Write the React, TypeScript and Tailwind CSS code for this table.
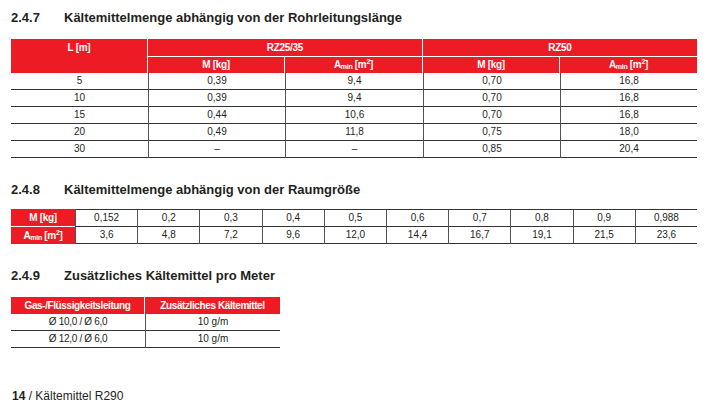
import React from "react";

const Amin = () => (
  <span>
    A<span className="text-[7px] align-[-1px]">min</span> [m<sup className="text-[7px] top-[-4px]">2</sup>]
  </span>
);

const Title = ({ n, t, cls }: { n: string; t: string; cls: string }) => (
  <div className={"flex text-[13px] leading-[16px] font-bold text-[#231f20] " + cls}>
    <span className="w-[53px]">{n}</span>
    <span>{t}</span>
  </div>
);

const rows1 = [
  ["5", "0,39", "9,4", "0,70", "16,8"],
  ["10", "0,39", "9,4", "0,70", "16,8"],
  ["15", "0,44", "10,6", "0,70", "16,8"],
  ["20", "0,49", "11,8", "0,75", "18,0"],
  ["30", "–", "–", "0,85", "20,4"],
];

const mVals = ["0,152", "0,2", "0,3", "0,4", "0,5", "0,6", "0,7", "0,8", "0,9", "0,988"];
const aVals = ["3,6", "4,8", "7,2", "9,6", "12,0", "14,4", "16,7", "19,1", "21,5", "23,6"];

export default function App() {
  return (
    <div className="w-[708px] h-[410px] bg-white pl-[11px] pt-[10px] font-['Liberation_Sans',Arial,sans-serif] text-[#231f20]">
      <Title n="2.4.7" t="Kältemittelmenge abhängig von der Rohrleitungslänge" cls="" />

      <div className="mt-[13px] grid w-[686px] grid-cols-[137px_137px_138px_137px_137px] text-[10px] text-center">
        <div className="row-span-2 bg-[#ed1c24] text-white font-bold tracking-[-0.3px] border-r border-white leading-[18px]">L [m]</div>
        <div className="col-span-2 h-[18px] bg-[#ed1c24] text-white font-bold tracking-[-0.3px] border-r border-b border-white leading-[17px]">RZ25/35</div>
        <div className="col-span-2 h-[18px] bg-[#ed1c24] text-white font-bold tracking-[-0.3px] border-b border-white leading-[17px]">RZ50</div>
        <div className="h-[16px] bg-[#ed1c24] text-white font-bold tracking-[-0.3px] border-r border-white leading-[16px]">M [kg]</div>
        <div className="h-[16px] bg-[#ed1c24] text-white font-bold tracking-[-0.3px] border-r border-white leading-[16px]"><Amin /></div>
        <div className="h-[16px] bg-[#ed1c24] text-white font-bold tracking-[-0.3px] border-r border-white leading-[16px]">M [kg]</div>
        <div className="h-[16px] bg-[#ed1c24] text-white font-bold tracking-[-0.3px] leading-[16px]"><Amin /></div>
        {rows1.map((r, i) =>
          r.map((c, j) => (
            <div
              key={i + "-" + j}
              className={
                "h-[17px] leading-[16px] border-b border-[#333] " +
                (j > 0 ? "border-l border-l-[#555]" : "")
              }
            >
              {c}
            </div>
          ))
        )}
      </div>

      <Title n="2.4.8" t="Kältemittelmenge abhängig von der Raumgröße" cls="mt-[24px]" />

      <div className="mt-[11px] grid w-[686px] grid-cols-[64px_repeat(10,1fr)] text-[10px] text-center">
        <div className="h-[18px] bg-[#ed1c24] text-white font-bold tracking-[-0.3px] border-b border-white leading-[17px]">M [kg]</div>
        {mVals.map((v, i) => (
          <div key={"m" + i} className="h-[18px] border-t border-b border-[#333] border-l border-l-[#555] leading-[16px]">{v}</div>
        ))}
        <div className="h-[17px] bg-[#ed1c24] text-white font-bold tracking-[-0.3px] leading-[17px]"><Amin /></div>
        {aVals.map((v, i) => (
          <div key={"a" + i} className="h-[17px] border-b border-[#333] border-l border-l-[#555] leading-[16px]">{v}</div>
        ))}
      </div>

      <Title n="2.4.9" t="Zusätzliches Kältemittel pro Meter" cls="mt-[24px]" />

      <div className="mt-[13px] grid w-[269px] grid-cols-[134px_135px] text-[10px] text-center">
        <div className="h-[17px] bg-[#ed1c24] text-white font-bold tracking-[-0.4px] border-r border-white leading-[17px]">Gas-/Flüssigkeitsleitung</div>
        <div className="h-[17px] bg-[#ed1c24] text-white font-bold tracking-[-0.4px] leading-[17px]">Zusätzliches Kältemittel</div>
        <div className="h-[17px] border-b border-[#333] tracking-[-0.3px] leading-[16px]">Ø 10,0 / Ø 6,0</div>
        <div className="h-[17px] border-b border-[#333] border-l border-l-[#555] leading-[16px]">10 g/m</div>
        <div className="h-[17px] border-b border-[#333] tracking-[-0.3px] leading-[16px]">Ø 12,0 / Ø 6,0</div>
        <div className="h-[17px] border-b border-[#333] border-l border-l-[#555] leading-[16px]">10 g/m</div>
      </div>

      <div className="mt-[41px] pl-[1px] text-[12px] leading-[14px] text-[#231f20]">
        <span className="font-bold">14</span> / Kältemittel R290
      </div>
    </div>
  );
}
